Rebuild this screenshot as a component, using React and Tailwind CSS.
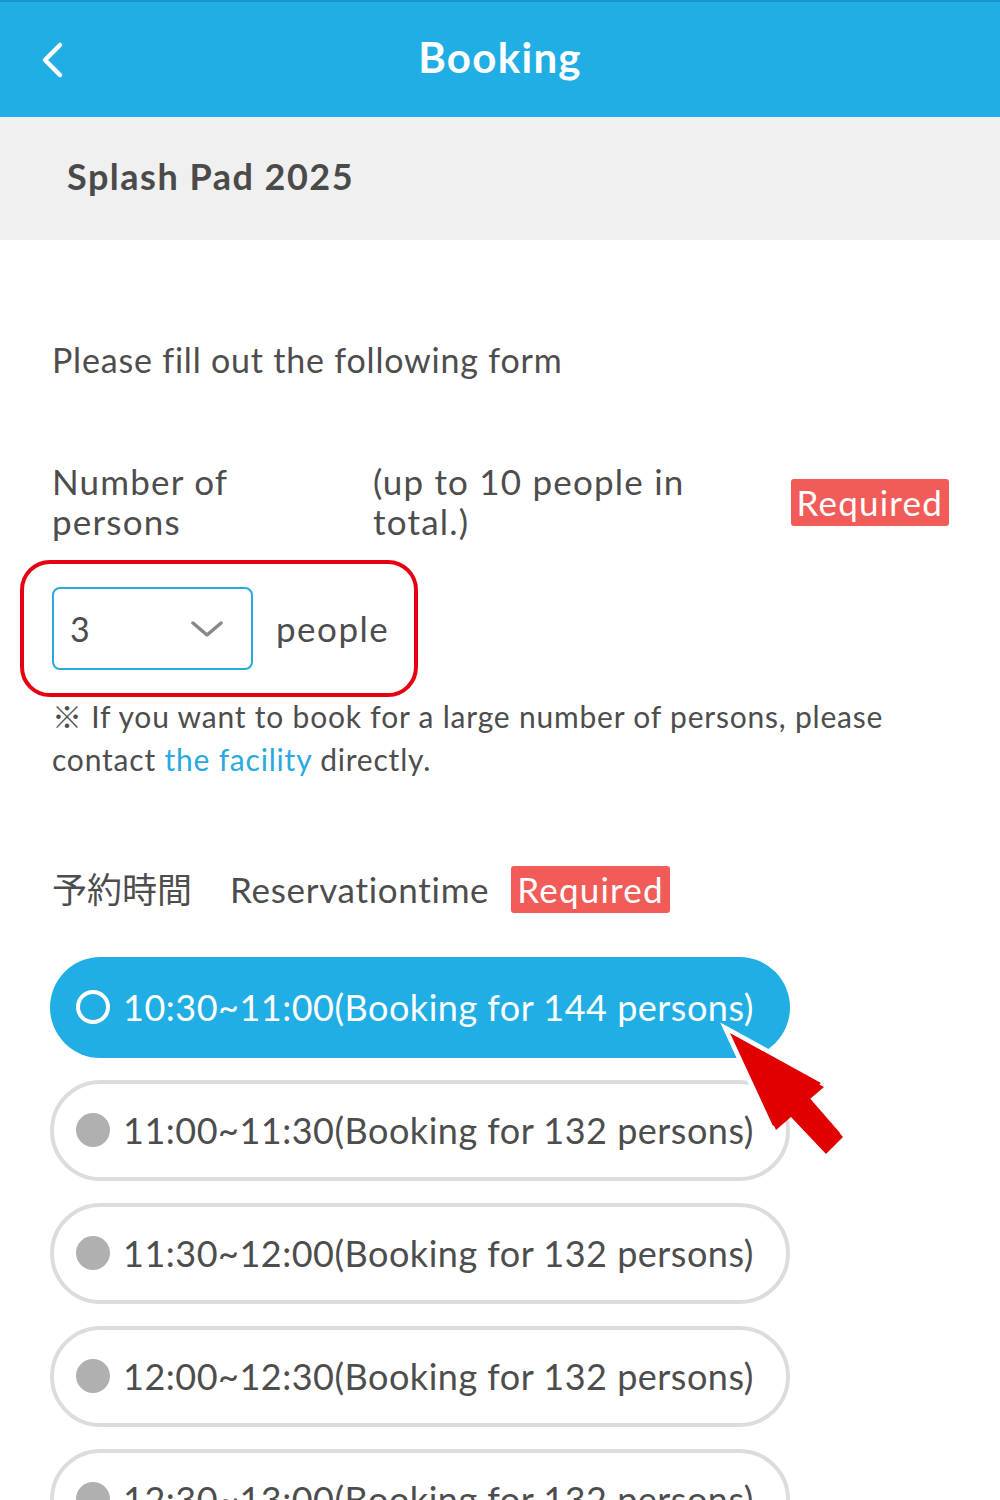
import React from "react";

const slots = [
  { time: "10:30~11:00", count: 144, active: true },
  { time: "11:00~11:30", count: 132 },
  { time: "11:30~12:00", count: 132 },
  { time: "12:00~12:30", count: 132 },
  { time: "12:30~13:00", count: 132 },
];

const Badge = ({ className = "" }) => (
  <span
    className={`inline-flex items-center justify-center h-[47px] px-[6px] rounded-[3px] bg-[#f15c59] text-white text-[35px] tracking-[1.2px] leading-none ${className}`}
  >
    Required
  </span>
);

const App = () => {
  return (
    <div
      className="relative w-[1000px] h-[1500px] overflow-hidden bg-white text-[#4d4d4d]"
      style={{ fontFamily: "Lato, 'Noto Sans CJK JP', sans-serif" }}
    >
      {/* HEADER */}
      <div className="relative h-[117px] bg-[#21aee4] border-t-[2px] border-[#1b95c9] flex items-center justify-center">
        <svg
          className="absolute left-[36px] top-[36px]"
          width="36"
          height="44"
          viewBox="0 0 36 44"
          fill="none"
        >
          <path
            d="M24 7 L9 22 L24 37"
            stroke="white"
            strokeWidth="4.5"
            strokeLinecap="round"
            strokeLinejoin="round"
          />
        </svg>
        <p className="text-white text-[42px] font-bold tracking-[1.3px] -mt-[4px]">Booking</p>
      </div>

      {/* EVENT TITLE */}
      <div className="h-[123px] bg-[#f0f0f0] flex items-center px-[67px]">
        <p className="text-[36px] font-bold tracking-[1.5px] text-[#4a4a4a] -mt-[6px]">Splash Pad 2025</p>
      </div>

      {/* FORM */}
      <div className="px-[52px]">
        <p className="pt-[100px] text-[34px] leading-[40px] tracking-[0.8px]">
          Please fill out the following form
        </p>

        {/* NUMBER OF PERSONS */}
        <div className="mt-[81px] flex items-start">
          <p className="w-[321px] text-[35px] leading-[40px] tracking-[1.2px]">
            Number of
            <br />
            persons
          </p>
          <p className="flex-1 text-[35px] leading-[40px] tracking-[1.2px]">
            (up to 10 people in
            <br />
            total.)
          </p>
          <Badge className="mt-[18px] mr-[-1px]" />
        </div>

        <div className="mt-[19px] -ml-[32px] w-[398px] h-[137px] border-[4px] border-[#e60012] rounded-[30px] flex items-center pl-[28px]">
          <div className="w-[201px] h-[83px] border-[2px] border-[#2aa9e0] rounded-[8px] flex items-center justify-between pl-[16px] pr-[28px]">
            <span className="text-[34px]">3</span>
            <svg width="32" height="18" viewBox="0 0 32 18" fill="none">
              <path
                d="M2 3 L16 15 L30 3"
                stroke="#888"
                strokeWidth="3.5"
                strokeLinecap="round"
                strokeLinejoin="round"
              />
            </svg>
          </div>
          <span className="ml-[23px] text-[35px] tracking-[1.5px]">people</span>
        </div>

        <p className="-mt-[2px] text-[30px] leading-[43px] tracking-[0.8px]">
          ※ If you want to book for a large number of persons, please
          <br />
          contact <span className="text-[#2aa9e0]">the facility</span> directly.
        </p>

        {/* RESERVATION TIME */}
        <div className="mt-[82px] flex items-center">
          <span className="text-[35px]">予約時間</span>
          <span className="ml-[38px] text-[35px] tracking-[0.7px]">Reservationtime</span>
          <Badge className="ml-[22px]" />
        </div>

        <div className="mt-[41px] flex flex-col gap-[22px] -ml-[2px]">
          {slots.map((s) => (
            <div
              key={s.time}
              className={`w-[740px] h-[101px] rounded-full flex items-center ${
                s.active
                  ? "bg-[#21aee4] text-white pl-[26px]"
                  : "bg-white border-[4px] border-[#dcdcdc] pl-[22px]"
              }`}
            >
              {s.active ? (
                <span className="w-[34px] h-[34px] rounded-full border-[4px] border-white shrink-0" />
              ) : (
                <span className="w-[34px] h-[34px] rounded-full bg-[#b0b0b0] shrink-0" />
              )}
              <span className="ml-[13px] text-[36px] tracking-[0.5px] whitespace-nowrap">
                {s.time}(Booking for {s.count} persons)
              </span>
            </div>
          ))}
        </div>
      </div>

      {/* POINTER ARROW */}
      <svg
        className="absolute left-0 top-0 pointer-events-none"
        width="1000"
        height="1500"
        viewBox="0 0 1000 1500"
      >
        <polygon
          points="733,1037 824,1087 810,1099 843,1137 826,1154 791,1117 776,1130"
          fill="#e00000"
          stroke="white"
          strokeWidth="9"
          strokeLinejoin="miter"
          paintOrder="stroke"
          transform="translate(-3,-4)"
        />
        <polygon
          points="733,1037 824,1087 810,1099 843,1137 826,1154 791,1117 776,1130"
          fill="#e00000"
        />
      </svg>
    </div>
  );
};

export default App;
